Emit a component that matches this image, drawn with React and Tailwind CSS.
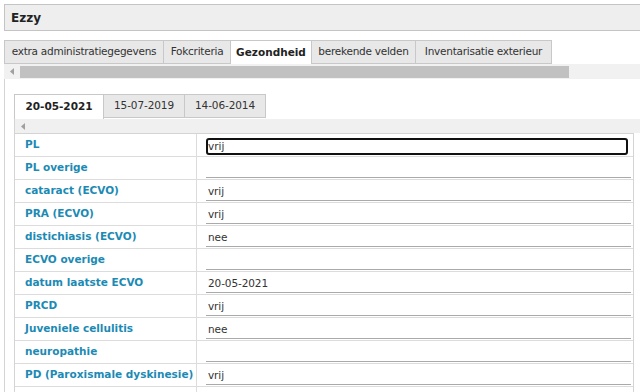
const tabs = [
  ['extra administratiegegevens', 'w-[160px]'],
  ['Fokcriteria', 'w-[68px]'],
  ['Gezondheid', 'w-[82px]'],
  ['berekende velden', 'w-[105px]'],
  ['Inventarisatie exterieur', 'w-[137px]'],
];

const dates = ['20-05-2021', '15-07-2019', '14-06-2014'];

const rows = [
  ['PL', 'vrij'],
  ['PL overige', ''],
  ['cataract (ECVO)', 'vrij'],
  ['PRA (ECVO)', 'vrij'],
  ['distichiasis (ECVO)', 'nee'],
  ['ECVO overige', ''],
  ['datum laatste ECVO', '20-05-2021'],
  ['PRCD', 'vrij'],
  ['Juveniele cellulitis', 'nee'],
  ['neuropathie', ''],
  ['PD (Paroxismale dyskinesie)', 'vrij'],
  ['', ''],
];

function LeftArrow() {
  return (
    <svg width="4" height="7" viewBox="0 0 4 7">
      <path d="M4 0 L0 3.5 L4 7 Z" fill="#a0a0a0" />
    </svg>
  );
}

export default function App() {
  return (
    <div
      className="w-[640px] h-[392px] overflow-hidden bg-white text-[#333]"
      style={{ fontFamily: '"DejaVu Sans", Verdana, sans-serif' }}
    >
      <div className="mt-[4px] ml-[4px] h-[27px] border border-r-0 border-[#c4c4c4] bg-[#eeeeee] flex items-center pl-[6px] text-[12px] font-bold text-[#222]">
        Ezzy
      </div>

      <div className="mt-[9px] ml-[4px] flex h-[24px]">
        {tabs.map(([t, w], i) => (
          <div
            key={t}
            className={
              i === 2
                ? `${w} h-[24px] flex items-center justify-center text-[10.5px] font-bold text-[#222] bg-white border border-[#c8c8c8] border-b-0 -ml-px`
                : `${w} h-[24px] flex items-center justify-center text-[10.5px] tracking-[-0.25px] text-[#333] bg-[#e8e8e8] border border-[#c8c8c8] -ml-px first:ml-0`
            }
          >
            {t}
          </div>
        ))}
      </div>

      <div className="ml-[4px] h-[15px] flex items-center bg-[#f1f1f1]">
        <div className="w-[16px] flex justify-center">
          <LeftArrow />
        </div>
        <div className="w-[549px] h-[12px] bg-[#c1c1c1]" />
      </div>

      <div className="ml-[4px] border-l border-[#d4d4d4] pl-[9px] pt-[15px] h-[400px]">
        <div className="flex h-[25px]">
          {dates.map((d, i) => (
            <div
              key={d}
              className={
                i === 0
                  ? 'w-[90px] h-[25px] flex items-center justify-center text-[10.5px] font-bold text-[#222] bg-white border border-[#c8c8c8] border-b-0'
                  : 'w-[82px] h-[24px] flex items-center justify-center text-[10.5px] tracking-[-0.1px] text-[#333] bg-[#e8e8e8] border border-[#c8c8c8] -ml-px'
              }
            >
              {d}
            </div>
          ))}
        </div>

        <div className="h-[14px] flex items-center pl-[6px] bg-[#f0f0f0] border-l border-[#d4d4d4]">
          <LeftArrow />
        </div>

        <div className="w-[620px] border border-[#d4d4d4] border-b-0">
          {rows.map(([label, value], i) => (
            <div key={i} className="flex h-[23px] border-b border-[#dcdcdc]">
              <div className="w-[182px] shrink-0 border-r border-[#dcdcdc] pl-[10px] pt-[3px] text-[10.5px] font-bold text-[#1c8ab4] whitespace-nowrap">
                {label}
              </div>
              <div className="flex-1 pl-[9px] pr-[2px]">
                {i === 0 ? (
                  <div className="mt-[4px] mr-[3px] h-[17px] border-2 border-[#111] rounded-[3px] flex items-center text-[10.5px] text-[#333]">
                    {value}
                  </div>
                ) : (
                  <div className="mt-[4px] h-[17px] border-b border-[#aaaaaa] flex items-center pl-[2px] text-[10.5px] tracking-[-0.1px] text-[#333]">
                    {value}
                  </div>
                )}
              </div>
            </div>
          ))}
        </div>
      </div>
    </div>
  );
}
